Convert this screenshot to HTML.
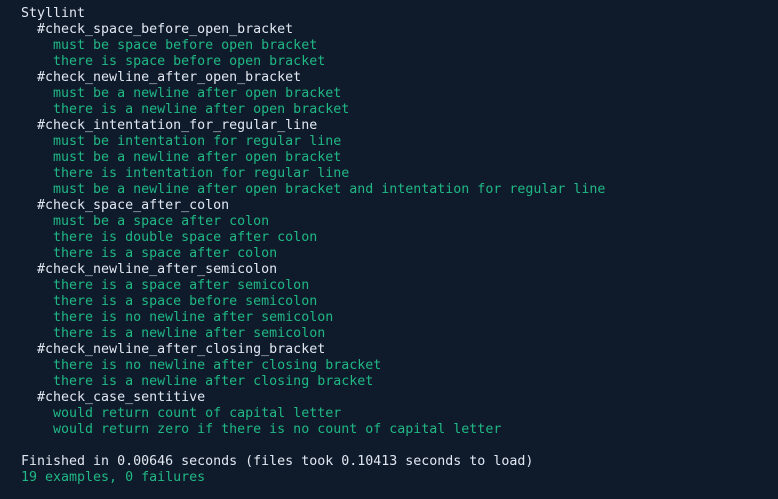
<!DOCTYPE html>
<html><head><style>
html,body{margin:0;padding:0;background:#0f1a2b;width:778px;height:499px;overflow:hidden}
pre{margin:0;position:absolute;left:21px;top:6px;font-family:"DejaVu Sans Mono","Liberation Mono",monospace;font-size:13.3px;line-height:16px;color:#e2e8f2;white-space:pre}
.g{color:#20b884}
</style></head><body>
<pre>Styllint
  #check_space_before_open_bracket
<span class="g">    must be space before open bracket
    there is space before open bracket</span>
  #check_newline_after_open_bracket
<span class="g">    must be a newline after open bracket
    there is a newline after open bracket</span>
  #check_intentation_for_regular_line
<span class="g">    must be intentation for regular line
    must be a newline after open bracket
    there is intentation for regular line
    must be a newline after open bracket and intentation for regular line</span>
  #check_space_after_colon
<span class="g">    must be a space after colon
    there is double space after colon
    there is a space after colon</span>
  #check_newline_after_semicolon
<span class="g">    there is a space after semicolon
    there is a space before semicolon
    there is no newline after semicolon
    there is a newline after semicolon</span>
  #check_newline_after_closing_bracket
<span class="g">    there is no newline after closing bracket
    there is a newline after closing bracket</span>
  #check_case_sentitive
<span class="g">    would return count of capital letter
    would return zero if there is no count of capital letter</span>

Finished in 0.00646 seconds (files took 0.10413 seconds to load)
<span class="g">19 examples, 0 failures</span></pre>
</body></html>
